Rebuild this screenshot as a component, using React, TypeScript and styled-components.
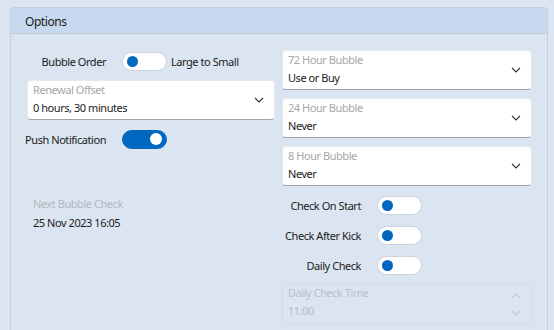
import React from 'react';
import styled, { createGlobalStyle, css } from 'styled-components';

const GlobalStyle = createGlobalStyle`
  html, body {
    margin: 0;
    padding: 0;
    background: #dbe5f1;
    overflow: hidden;
  }
  body {
    font-family: "Noto Sans", "Open Sans", sans-serif;
    font-size: 11px;
    letter-spacing: -0.45px;
    color: #1b1b1b;
  }
  #root {
    width: 554px;
    height: 330px;
    overflow: hidden;
  }
`;

const Panel = styled.div`
  margin: 7px 0 0 10px;
  width: 536px;
  height: 340px;
  border: 1px solid #c9ced4;
  border-radius: 4px 4px 0 0;
  background: #dbe5f1;
`;

const Header = styled.div`
  height: 26px;
  display: flex;
  align-items: center;
  padding-left: 14px;
  padding-top: 1px;
  box-sizing: border-box;
  background: #c6d9ef;
  border-bottom: 1px solid #c3c9d0;
  border-radius: 3px 3px 0 0;
  font-size: 12px;
`;

const Body = styled.div`
  display: grid;
  grid-template-columns: 248px 250px;
  column-gap: 7px;
  align-items: start;
  padding: 16px 15px 0 16px;
`;

const Column = styled.div`
  display: flex;
  flex-direction: column;
  gap: 8px;
`;

const Row = styled.div`
  display: flex;
  align-items: center;
  height: 22px;
`;

const RowLabel = styled.div`
  width: 79px;
  flex-shrink: 0;
  display: flex;
  justify-content: flex-end;
  white-space: nowrap;
  margin-right: 16px;
`;

const Track = styled.div<{ on?: boolean }>`
  width: 35px;
  height: 17px;
  padding: 0 4px;
  border-radius: 10px;
  border: 1px solid #cdd3da;
  background: #ffffff;
  display: flex;
  align-items: center;
  ${p => p.on && css`
    background: #0067c0;
    border-color: #0067c0;
    justify-content: flex-end;
  `}
`;

const Knob = styled.div<{ on?: boolean }>`
  width: 11px;
  height: 11px;
  border-radius: 50%;
  background: #0067c0;
  ${p => p.on && css`
    width: 12px;
    height: 12px;
    background: #ffffff;
  `}
`;

const SideText = styled.span`
  margin-left: 4px;
  white-space: nowrap;
`;

const Field = styled.div<{ disabled?: boolean }>`
  position: relative;
  height: 40px;
  box-sizing: border-box;
  padding: 1px 0 0 5px;
  background: #ffffff;
  border: 1px solid #e6e8eb;
  border-bottom-color: #9da3aa;
  border-radius: 4px;
  ${p => p.disabled && css`
    height: 41px;
    margin-top: -1px;
    background: transparent;
    border-color: #d2dbe6;
  `}
`;

const FieldLabel = styled.div<{ disabled?: boolean }>`
  line-height: 15px;
  color: ${p => (p.disabled ? '#b9c0c8' : '#a6a6a6')};
  white-space: nowrap;
`;

const FieldValue = styled.div<{ disabled?: boolean }>`
  line-height: 22px;
  color: ${p => (p.disabled ? '#b4bcc5' : '#1b1b1b')};
  white-space: nowrap;
`;

const ChevronBox = styled.div`
  position: absolute;
  right: 10px;
  top: 0;
  bottom: 0;
  display: flex;
  align-items: center;
`;

const Spinner = styled.div`
  position: absolute;
  right: 10px;
  top: 9px;
  display: flex;
  flex-direction: column;
  gap: 11px;
`;

const Icon = styled.svg`
  display: block;
`;

const Info = styled.div`
  margin-top: 38px;
  padding-left: 6px;
`;

const InfoLabel = styled.div`
  line-height: 16px;
  color: #b3b8be;
`;

const InfoValue = styled.div`
  line-height: 22px;
`;

const ChevronDown = ({ color = '#333' }: { color?: string }) => (
  <Icon width="10" height="6" viewBox="0 0 10 6">
    <polyline points="1,1 5,5 9,1" fill="none" stroke={color} strokeWidth="1.1" />
  </Icon>
);

const ChevronUp = ({ color = '#333' }: { color?: string }) => (
  <Icon width="10" height="6" viewBox="0 0 10 6">
    <polyline points="1,5 5,1 9,5" fill="none" stroke={color} strokeWidth="1.1" />
  </Icon>
);

const Toggle = ({ on }: { on?: boolean }) => (
  <Track on={on}>
    <Knob on={on} />
  </Track>
);

const Combo = ({ label, value }: { label: string; value: string }) => (
  <Field>
    <FieldLabel>{label}</FieldLabel>
    <FieldValue>{value}</FieldValue>
    <ChevronBox>
      <ChevronDown />
    </ChevronBox>
  </Field>
);

export default function App() {
  return (
    <>
      <GlobalStyle />
      <Panel>
        <Header>Options</Header>
        <Body>
          <Column>
            <Row>
              <RowLabel>Bubble Order</RowLabel>
              <Toggle />
              <SideText>Large to Small</SideText>
            </Row>
            <Combo label="Renewal Offset" value="0 hours, 30 minutes" />
            <Row>
              <RowLabel>Push Notification</RowLabel>
              <Toggle on />
            </Row>
            <Info>
              <InfoLabel>Next Bubble Check</InfoLabel>
              <InfoValue>25 Nov 2023 16:05</InfoValue>
            </Info>
          </Column>
          <Column>
            <Combo label="72 Hour Bubble" value="Use or Buy" />
            <Combo label="24 Hour Bubble" value="Never" />
            <Combo label="8 Hour Bubble" value="Never" />
            <Row>
              <RowLabel>Check On Start</RowLabel>
              <Toggle />
            </Row>
            <Row>
              <RowLabel>Check After Kick</RowLabel>
              <Toggle />
            </Row>
            <Row>
              <RowLabel>Daily Check</RowLabel>
              <Toggle />
            </Row>
            <Field disabled>
              <FieldLabel disabled>Daily Check Time</FieldLabel>
              <FieldValue disabled>11:00</FieldValue>
              <Spinner>
                <ChevronUp color="#c0c8d1" />
                <ChevronDown color="#c0c8d1" />
              </Spinner>
            </Field>
          </Column>
        </Body>
      </Panel>
    </>
  );
}
